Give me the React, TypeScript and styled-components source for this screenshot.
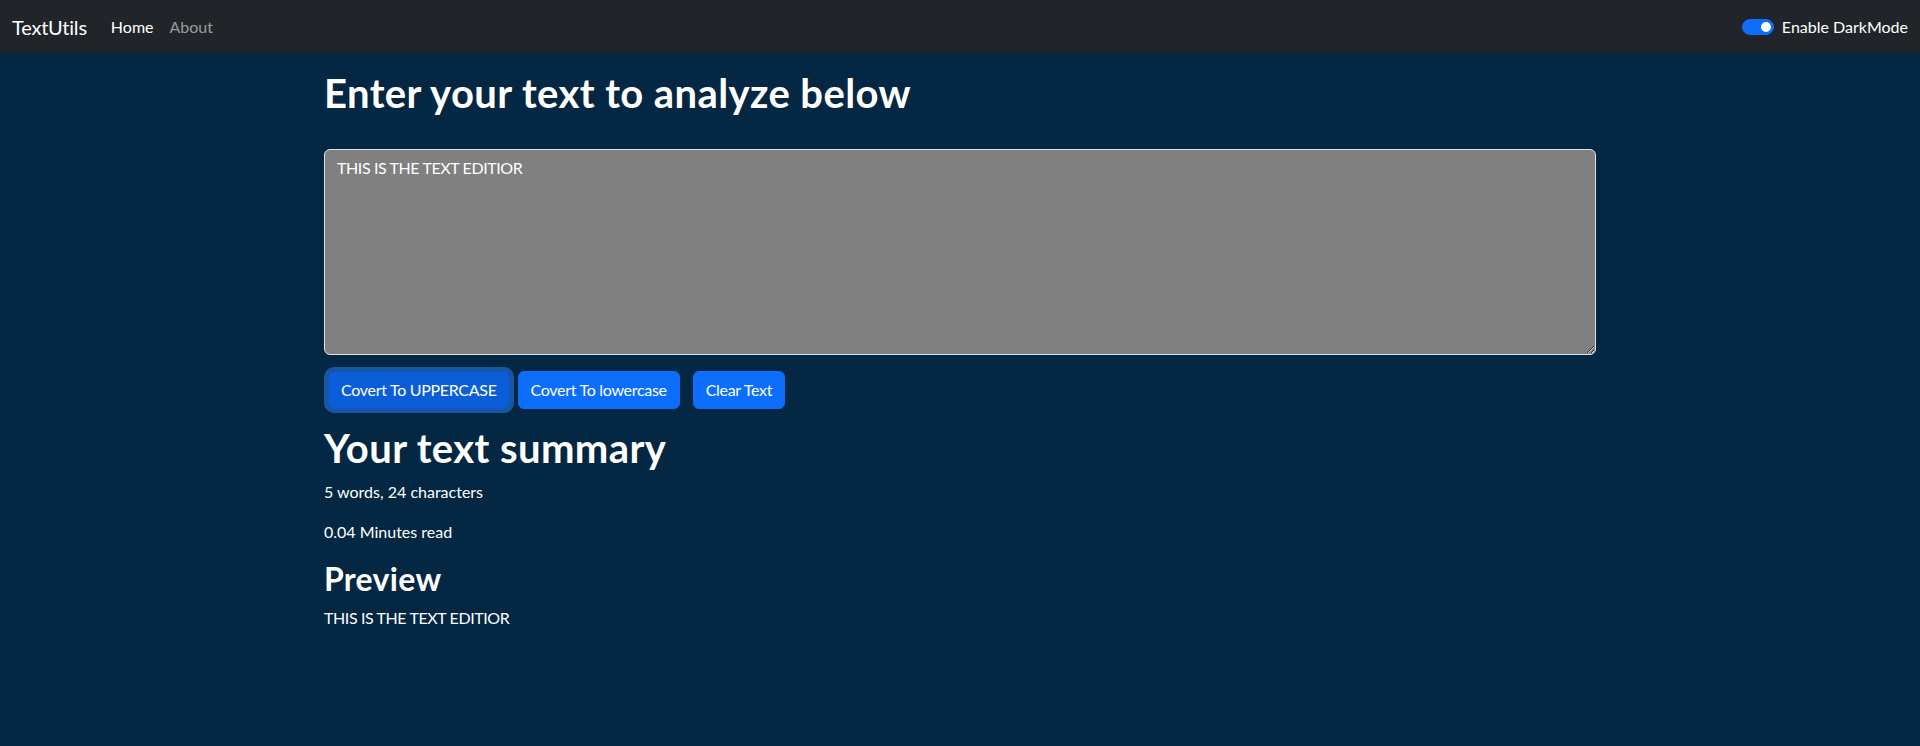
import React, { useState } from "react";
import styled, { createGlobalStyle } from "styled-components";

const Global = createGlobalStyle`
  html, body { margin: 0; padding: 0; height: 100%; }
  body {
    background: #042743;
    color: #ffffff;
    font-family: Lato, "Noto Sans", "Liberation Sans", sans-serif;
    font-size: 16px;
    line-height: 1.5;
  }
  #root { min-height: 100%; }
  * { box-sizing: border-box; }
`;

const Nav = styled.nav`
  height: 53px;
  background: #212529;
  display: flex;
  align-items: center;
  justify-content: space-between;
  padding: 0 12px;
`;

const Left = styled.div`
  display: flex;
  align-items: center;
`;

const Brand = styled.a`
  font-size: 20px;
  color: #fff;
  text-decoration: none;
  margin-right: 16px;
  line-height: 30px;
  letter-spacing: -0.2px;
`;

const NavLink = styled.a<{ $active?: boolean }>`
  padding: 0 8px;
  font-size: 16px;
  line-height: 24px;
  text-decoration: none;
  color: ${(p) => (p.$active ? "#fff" : "rgba(255,255,255,0.55)")};
`;

const SwitchWrap = styled.label`
  display: flex;
  align-items: center;
  gap: 8px;
  font-size: 16px;
  color: #fff;
  cursor: pointer;
`;

const Track = styled.span<{ $on: boolean }>`
  position: relative;
  width: 32px;
  height: 16px;
  border-radius: 8px;
  background: ${(p) => (p.$on ? "#0d6efd" : "#ffffff")};
  border: 1px solid ${(p) => (p.$on ? "#0d6efd" : "rgba(0,0,0,0.25)")};
  display: inline-block;
`;

const Knob = styled.span<{ $on: boolean }>`
  position: absolute;
  top: 2px;
  left: ${(p) => (p.$on ? "18px" : "2px")};
  width: 10px;
  height: 10px;
  border-radius: 50%;
  background: ${(p) => (p.$on ? "#fff" : "rgba(0,0,0,0.25)")};
`;

const Main = styled.main`
  width: 1272px;
  margin: 16px auto 0;
`;

const H1 = styled.h1<{ $mb: number }>`
  font-size: 40px;
  font-weight: 700;
  line-height: 48px;
  letter-spacing: 0.4px;
  margin: 0 0 ${(p) => p.$mb}px;
`;

const H2 = styled.h2`
  font-size: 32px;
  font-weight: 700;
  line-height: 38.4px;
  letter-spacing: 0.3px;
  margin: 0 0 8px;
`;

const TextArea = styled.textarea`
  display: block;
  width: 100%;
  height: 206px;
  padding: 6px 12px;
  font-family: inherit;
  font-size: 16px;
  line-height: 24px;
  letter-spacing: -0.4px;
  color: #fff;
  background: grey;
  border: 1px solid #dee2e6;
  border-radius: 6px;
  margin: 0 0 16px;
  outline: none;
`;

const ButtonRow = styled.div`
  display: flex;
  align-items: center;
  height: 38px;
  margin-bottom: 15px;
`;

const Button = styled.button<{ $focus?: boolean; $ml: number }>`
  font-family: inherit;
  font-size: 16px;
  line-height: 24px;
  letter-spacing: -0.3px;
  padding: 6px 12px;
  margin: 0 4px 0 ${(p) => p.$ml}px;
  color: #fff;
  background: ${(p) => (p.$focus ? "#0b5ed7" : "#0d6efd")};
  border: 1px solid ${(p) => (p.$focus ? "#0a58ca" : "#0d6efd")};
  border-radius: 6px;
  box-shadow: ${(p) => (p.$focus ? "0 0 0 4px rgba(49,132,253,0.5)" : "none")};
  cursor: pointer;
`;

const Para = styled.p<{ $mb: number; $tight?: boolean }>`
  margin: 0 0 ${(p) => p.$mb}px;
  font-size: 16px;
  line-height: 24px;
  letter-spacing: ${(p) => (p.$tight ? "-0.4px" : "0")};
`;

export default function App() {
  const [text, setText] = useState("THIS IS THE TEXT EDITIOR");
  const [dark, setDark] = useState(true);
  const words = text.split(/\s+/).filter((w) => w.length > 0).length;
  return (
    <>
      <Global />
      <Nav>
        <Left>
          <Brand href="#">TextUtils</Brand>
          <NavLink $active href="#">Home</NavLink>
          <NavLink href="#">About</NavLink>
        </Left>
        <SwitchWrap onClick={() => setDark(!dark)}>
          <Track $on={dark}>
            <Knob $on={dark} />
          </Track>
          Enable DarkMode
        </SwitchWrap>
      </Nav>
      <Main>
        <H1 $mb={32}>Enter your text to analyze below</H1>
        <TextArea value={text} onChange={(e) => setText(e.target.value)} />
        <ButtonRow>
          <Button $focus $ml={4} onClick={() => setText(text.toUpperCase())}>Covert To UPPERCASE</Button>
          <Button $ml={4} onClick={() => setText(text.toLowerCase())}>Covert To lowercase</Button>
          <Button $ml={9} onClick={() => setText("")}>Clear Text</Button>
        </ButtonRow>
        <H1 $mb={8}>Your text summary</H1>
        <Para $mb={16}>{words} words, {text.length} characters</Para>
        <Para $mb={16}>{(0.008 * words).toFixed(2)} Minutes read</Para>
        <H2>Preview</H2>
        <Para $mb={0} $tight>{text}</Para>
      </Main>
    </>
  );
}
